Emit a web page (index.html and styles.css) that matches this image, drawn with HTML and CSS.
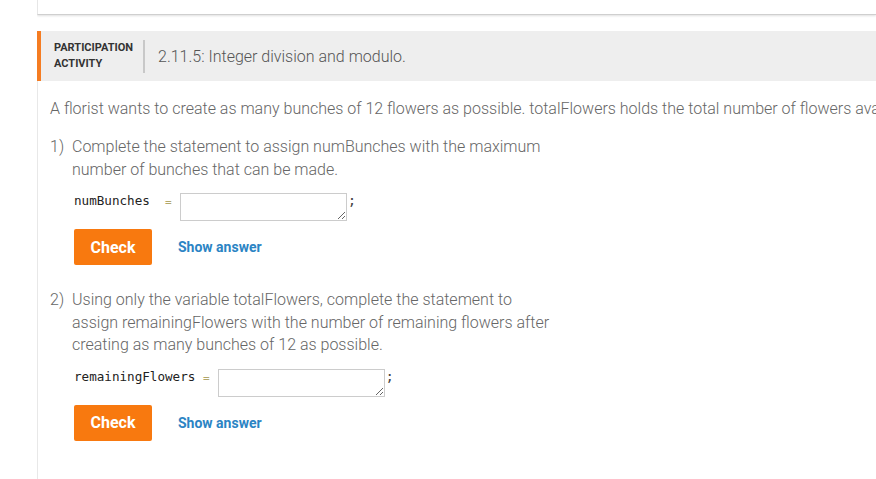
FILE: index.html
```html
<!DOCTYPE html>
<html>
<head>
<meta charset="utf-8">
<link rel="stylesheet" href="styles.css">
</head>
<body>
<div class="page">
  <div class="top-card"></div>
  <div class="activity">
    <div class="header">
      <div class="label">PARTICIPATION<br>ACTIVITY</div>
      <div class="divider"></div>
      <div class="title">2.11.5: Integer division and modulo.</div>
    </div>
    <div class="content">
      <p class="intro">A florist wants to create as many bunches of 12 flowers as possible. totalFlowers holds the total number of flowers available.</p>
      <div class="question">
        <div class="qnum">1)</div>
        <div class="qbody">
          <div class="qtext">Complete the statement to assign numBunches with the maximum number of bunches that can be made.</div>
          <div class="code-row">
            <span class="code">numBunches  </span><span class="eq">=</span>
            <textarea class="answer"></textarea>
            <span class="semi">;</span>
          </div>
          <div class="actions">
            <button class="check">Check</button>
            <span class="show">Show answer</span>
          </div>
        </div>
      </div>
      <div class="question">
        <div class="qnum">2)</div>
        <div class="qbody">
          <div class="qtext">Using only the variable totalFlowers, complete the statement to assign remainingFlowers with the number of remaining flowers after creating as many bunches of 12 as possible.</div>
          <div class="code-row">
            <span class="code">remainingFlowers </span><span class="eq">=</span>
            <textarea class="answer"></textarea>
            <span class="semi">;</span>
          </div>
          <div class="actions">
            <button class="check">Check</button>
            <span class="show">Show answer</span>
          </div>
        </div>
      </div>
    </div>
  </div>
</div>
</body>
</html>
```

FILE: styles.css
```css
html, body {
  margin: 0;
  padding: 0;
  background: #ffffff;
  overflow: hidden;
}
body {
  font-family: Roboto, "Liberation Sans", sans-serif;
  width: 876px;
  height: 479px;
}
.page {
  margin-left: 37px;
  width: 839px;
  overflow: hidden;
}
.top-card {
  height: 14px;
  border-left: 1px solid #e6e6e6;
  border-bottom: 1px solid #cfcfcf;
  box-shadow: 0 1px 2px rgba(0,0,0,0.12);
}
.activity {
  margin-top: 16px;
  border-left: 1px solid #e8e8e8;
  height: 460px;
}
.header {
  display: flex;
  align-items: center;
  height: 50px;
  background: #eeeeee;
  border-left: 4px solid #f57c22;
  margin-left: -1px;
}
.label {
  font-size: 11px;
  font-weight: 700;
  color: #333333;
  line-height: 16px;
  margin-left: 13px;
  width: 80px;
}
.divider {
  width: 2px;
  height: 33px;
  background: #c8c8c8;
  margin-left: 9px;
}
.title {
  font-size: 16px;
  font-weight: 300;
  color: #555555;
  margin-left: 13px;
}
.content {
  padding-left: 12px;
  color: #666666;
  font-weight: 300;
  font-size: 16px;
}
.intro {
  margin: 18px 0 0 0;
  line-height: 20px;
  white-space: nowrap;
}
.question {
  display: flex;
  margin-top: 17px;
}
.question + .question {
  margin-top: 24px;
}
.qnum {
  width: 22px;
  line-height: 22.5px;
  flex-shrink: 0;
}
.qbody {
  width: 480px;
}
.qtext {
  line-height: 22.5px;
}
.code-row {
  display: flex;
  align-items: flex-start;
  margin-top: 10px;
  padding-left: 2px;
}
.code {
  font-family: "DejaVu Sans Mono", "Liberation Mono", monospace;
  font-size: 12.6px;
  font-weight: 400;
  color: #222222;
  white-space: pre;
  line-height: 16px;
  margin-top: 2px;
}
.eq {
  font-family: "DejaVu Sans Mono", "Liberation Mono", monospace;
  font-size: 11px;
  color: #b2a76a;
  line-height: 16px;
  margin-top: 4px;
  margin-right: 8px;
}
.answer {
  display: block;
  width: 167px;
  height: 28px;
  box-sizing: border-box;
  border: 1px solid #cccccc;
  margin: 2px 0 0 0;
  padding: 0;
  resize: both;
  background: #ffffff;
}
.semi {
  font-family: "DejaVu Sans Mono", monospace;
  font-size: 14px;
  color: #444444;
  line-height: 14px;
  margin-left: 1px;
  margin-top: 2px;
}
.actions {
  display: flex;
  align-items: center;
  margin-top: 8px;
  padding-left: 2px;
}
.check {
  width: 78px;
  height: 36px;
  background: #f8790f;
  border: none;
  border-radius: 2px;
  color: #ffffff;
  font-family: Roboto, "Liberation Sans", sans-serif;
  font-weight: 700;
  font-size: 16px;
  padding: 0;
}
.show {
  margin-left: 26px;
  font-size: 14px;
  font-weight: 700;
  color: #2b84c4;
}
```
